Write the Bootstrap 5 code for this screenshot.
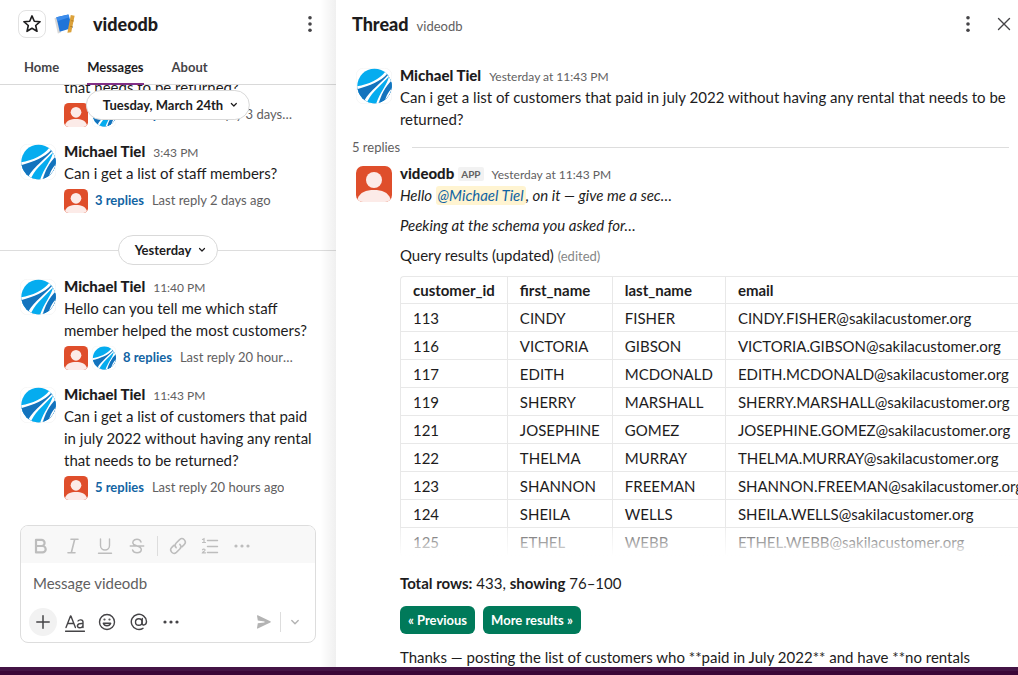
<!DOCTYPE html>
<html lang="en">
<head>
<meta charset="utf-8">
<meta name="viewport" content="width=device-width, initial-scale=1">
<title>videodb</title>
<link href="https://cdn.jsdelivr.net/npm/bootstrap@5.3.0/dist/css/bootstrap.min.css" rel="stylesheet">
<style>
body{font:400 15px/22px Lato,sans-serif;color:#1d1c1d;background:#fff}
button,input{font-family:inherit}
.app{height:100vh}
.app-main{min-height:0}
.app-bar{height:8px;background:linear-gradient(#441445 50%,#3a0637 50%)}
.pane-dm{flex:0 0 33%;min-width:0;position:relative}
.pane-dm::after{content:"";position:absolute;inset:0 0 0 auto;width:16px;background:linear-gradient(to right,rgba(0,0,0,0),rgba(0,0,0,.06));pointer-events:none}
.pane-thread{min-width:0}
.bare{background:none;border:0;padding:0;color:#454447;display:flex;align-items:center;justify-content:center}
.ib{width:28px;height:28px;flex:none}
.dm-head{height:48px;padding:0 12px 0 18px}
.star{border:1px solid #e2e2e2;border-radius:8px;color:#1d1c1d}
.title{font-size:18px;line-height:24px;font-weight:900;margin:0}
.dm-tabs{height:37px;padding:0 24px;gap:28px;border-bottom:1px solid #d9d9d9}
.dm-tabs a{color:#454447;font-size:13px;line-height:38px;font-weight:700;text-decoration:none;height:37px}
.dm-tabs a.active{color:#1d1c1d;box-shadow:inset 0 -2px #823087}
.feed{min-height:0;overflow:hidden;position:relative}
.pill{height:30px;border:1px solid #d9d9d9;border-radius:15px;background:#fff;font-size:13px;font-weight:700;color:#1d1c1d;padding:0 9px 0 16px;gap:5px}
.pill-top{position:absolute;top:5px;left:50%;transform:translateX(-50%);white-space:nowrap;z-index:1}
.day{margin:17px 0 2px}
.day::before,.day::after{content:"";flex:1;height:1px;background:#ddd}
.msg{padding:8px 20px 5px;gap:8px}
.msg-t{padding:0 8px 8px 20px;gap:8px}
.av{width:36px;height:36px;flex:none;margin-top:4px}
.av-s{width:24px;height:24px;flex:none}
.msg-b{min-width:0;flex:1}
.meta{height:22px}
.who{font-weight:900}
.when{font-size:12px;line-height:1;color:#616061;margin-left:8px}
.msg p,.msg-t p{margin:0}
.thr{margin-top:5px;gap:4px;padding-right:22px;font-size:13px;line-height:22px;color:#616061}
.thr a{color:#1264a3;font-weight:700;text-decoration:none;margin:0 4px 0 3px;white-space:nowrap}
.composer{margin:20px 20px 24px;border:1px solid #ddd;border-radius:8px;overflow:hidden}
.fmt{height:37px;background:#f8f8f8;padding:2px 6px 0;gap:4px}
.fmt .bare{color:#bdbdbd}
.vsep{width:1px;height:20px;background:#ddd;margin:0 2px}
.composer input{display:block;width:100%;height:40px;border:0;outline:0;padding:0 12px;background:#fff}
.composer input::placeholder{color:#616061;opacity:1}
.acts{height:39px;padding:0 10px 2px 8px;gap:4px}
.plus{background:#f2f2f2;border-radius:50%}
.acts .faint{color:#b3b3b3}
.acts .send{width:24px;height:28px}
.th-head{height:48px;padding:0 0 0 16px}
.th-sub{font-size:13px;color:#616061;margin:4px 0 0 8px}
.th-top{margin-top:16px}
.count{font-size:13px;color:#616061;margin:6px 9px 4px 16px;gap:12px}
.count::after{content:"";flex:1;height:1px;background:#ddd}
.thread-body{min-height:0;overflow:hidden}
.app-tag{font-size:10px;line-height:14px;font-weight:700;color:#616061;background:#f2f2f2;border-radius:2px;padding:0 3px;margin-left:4px;display:inline-block;vertical-align:1px}
.mention{background:#fff4d1;color:#1264a3;border-radius:3px;padding:0 2px 1px;text-decoration:none}
.msg-t .gap-top{margin-top:8px}
.edited{font-size:13px;line-height:1;color:#868686}
.grid-wrap{margin-top:10px;height:280px;overflow:hidden;position:relative;margin-right:-8px}
.grid-wrap::after{content:"";position:absolute;inset:auto 0 0;height:28px;background:linear-gradient(rgba(255,255,255,.25),rgba(255,255,255,.65) 60%,#fff)}
.grid{border-collapse:separate;border-spacing:0;border:1px solid #e8e8e8;border-width:1px 0 0 1px;border-radius:4px}
.grid td,.grid th{padding:0 12px;height:28px;border:1px solid #e8e8e8;border-width:0 1px 1px 0;white-space:nowrap}
.grid th{height:27px;font-weight:700}
.btn-go{background:#007a5a;color:#fff;font-size:13px;line-height:18px;font-weight:700;padding:4px 7px;border-radius:6px}
.btn-go:hover{background:#148567;color:#fff}
</style>
</head>
<body>
<svg width="0" height="0" class="position-absolute" aria-hidden="true">
<defs><clipPath id="disc"><circle cx="18.500" cy="18" r="17.2"/></clipPath></defs>
<symbol id="globe" viewBox="0 0 36 36"><rect x=".25" y=".25" width="35.5" height="35.5" rx="7" fill="#fff" stroke="#eee" stroke-width=".5"/><g clip-path="url(#disc)"><path fill="#05acef" d="M0 0h36v36H0z"/><path fill="#1373bd" d="M0 20C14 18 23 13 32 5l4 3v28H0z"/><path fill="#fff" d="M0 18.500C12 16.500 23 12 29.500 3.500l2 2C24 14 14 17.500 0 21.500z"/><path fill="#fff" d="M7 36C10 26 22 18 32.500 6.500L37 12C30 18 26 27 23 37H8z"/><path fill="#05acef" d="M10.500 36C13 27 23 19 33 8.500 31 17 24 24 20 36z"/><path fill="#1373bd" d="M22.500 36C25 27 29 19 36 12v16l-7 8z"/><path fill="#fff" d="M28 36C29.500 29 32 24 37 19l-1 4c-3 4-5 8-6 13z"/></g></symbol>
<symbol id="bot" viewBox="0 0 36 36"><rect width="36" height="36" rx="7" fill="#df4e2b"/><circle cx="18" cy="14" r="8" fill="#fcebe8"/><path fill="#fcebe8" d="M1.500 33C4 26 10 24 18 24s14 2 16.500 9c-1 2-3 3-5.500 3H7c-2.500 0-4.500-1-5.500-3z"/></symbol>
<symbol id="chev" viewBox="0 0 12 12"><path d="M3.500 4.500L6 7l2.500-2.500" fill="none" stroke="currentColor" stroke-width="1.200" stroke-linecap="round" stroke-linejoin="round"/></symbol>
<symbol id="kebab" viewBox="0 0 20 20"><g fill="currentColor"><circle cx="10" cy="3" r="2"/><circle cx="10" cy="10" r="2"/><circle cx="10" cy="17" r="2"/></g></symbol>
<symbol id="more" viewBox="0 0 20 20"><g fill="currentColor"><circle cx="4" cy="10" r="1.600"/><circle cx="10" cy="10" r="1.600"/><circle cx="16" cy="10" r="1.600"/></g></symbol>
</svg>
<div class="app d-flex flex-column overflow-hidden">
<main class="app-main d-flex flex-grow-1">
<section class="pane-dm d-flex flex-column">
<header class="dm-head d-flex align-items-center flex-shrink-0">
<button class="bare ib star" aria-label="Star"><svg width="20" height="20" viewBox="0 0 20 20" fill="none" stroke="currentColor" stroke-width="1.600" stroke-linejoin="round"><path d="M10 1.900l2.300 5.300 5.800.5-4.400 3.800 1.300 5.800-5-3-5 3 1.300-5.800L1.900 7.700l5.800-.5z"/></svg></button>
<svg class="ms-2 me-3" width="23" height="24" viewBox="0 0 24 24" aria-hidden="true"><path d="M.5 6l3-1 3.500 16-3 .8z" fill="#d8d8d8"/><path d="M2.500 5L15 2l4.500 14L6 20z" fill="#1f74d8"/><path d="M2.500 5L15 2l1 3-12.700 4z" fill="#3c8cec"/><path d="M17.500 2.500l4 1-3.500 17-4 .5z" fill="#dca23b"/><path d="M18 8.500l2.500.4M17 14.500l2.300.3" stroke="#b57c20"/></svg>
<h1 class="title">videodb</h1>
<button class="bare ib ms-auto" aria-label="More actions"><svg width="18" height="18"><use href="#kebab"/></svg></button>
</header>
<nav class="dm-tabs d-flex flex-shrink-0"><a href="#">Home</a><a href="#" class="active">Messages</a><a href="#">About</a></nav>
<div class="feed flex-grow-1 d-flex flex-column justify-content-end">
<button class="bare pill pill-top">Tuesday, March 24th<svg width="12" height="12"><use href="#chev"/></svg></button>
<article class="msg d-flex flex-shrink-0"><span class="av"></span><div class="msg-b"><p>that needs to be returned?</p>
<div class="thr d-flex"><svg class="av-s"><use href="#bot"/></svg><svg class="av-s"><use href="#globe"/></svg><a href="#">10 replies</a><span class="text-truncate">Last reply 3 days ago</span></div></div></article>
<article class="msg d-flex flex-shrink-0"><svg class="av"><use href="#globe"/></svg><div class="msg-b"><div class="meta"><span class="who">Michael Tiel</span><span class="when">3:43 PM</span></div><p>Can i get a list of staff members?</p>
<div class="thr d-flex"><svg class="av-s"><use href="#bot"/></svg><a href="#">3 replies</a><span class="text-truncate">Last reply 2 days ago</span></div></div></article>
<div class="day d-flex align-items-center flex-shrink-0"><button class="bare pill">Yesterday<svg width="12" height="12"><use href="#chev"/></svg></button></div>
<article class="msg d-flex flex-shrink-0"><svg class="av"><use href="#globe"/></svg><div class="msg-b"><div class="meta"><span class="who">Michael Tiel</span><span class="when">11:40 PM</span></div><p>Hello can you tell me which staff member helped the most customers?</p>
<div class="thr d-flex"><svg class="av-s"><use href="#bot"/></svg><svg class="av-s"><use href="#globe"/></svg><a href="#">8 replies</a><span class="text-truncate">Last reply 20 hours ago</span></div></div></article>
<article class="msg d-flex flex-shrink-0"><svg class="av"><use href="#globe"/></svg><div class="msg-b"><div class="meta"><span class="who">Michael Tiel</span><span class="when">11:43 PM</span></div><p>Can i get a list of customers that paid in july 2022 without having any rental that needs to be returned?</p>
<div class="thr d-flex"><svg class="av-s"><use href="#bot"/></svg><a href="#">5 replies</a><span class="text-truncate">Last reply 20 hours ago</span></div></div></article>
</div>
<form class="composer flex-shrink-0">
<div class="fmt d-flex align-items-center">
<button type="button" class="bare ib" aria-label="Bold"><svg width="20" height="20" viewBox="0 0 20 20" fill="none" stroke="currentColor" stroke-width="2.200" stroke-linejoin="round"><path d="M5 3.800h5.500a3 3 0 010 6.200H5zM5 10h6.500a3.200 3.200 0 010 6.400H5z"/></svg></button>
<button type="button" class="bare ib" aria-label="Italic"><svg width="20" height="20" viewBox="0 0 20 20" fill="none" stroke="currentColor" stroke-width="1.600" stroke-linecap="round"><path d="M8 3.300h7M5 16.700h7M11.700 3.300L8.300 16.700"/></svg></button>
<button type="button" class="bare ib" aria-label="Underline"><svg width="20" height="20" viewBox="0 0 20 20" fill="none" stroke="currentColor" stroke-width="1.400" stroke-linecap="round"><path d="M5.500 3v6.500a4.500 4.500 0 009 0V3M3.500 17.200h13"/></svg></button>
<button type="button" class="bare ib" aria-label="Strikethrough"><svg width="20" height="20" viewBox="0 0 20 20" fill="none" stroke="currentColor" stroke-width="1.500" stroke-linecap="round"><path d="M3.300 10h13.400M14 6c-.7-1.900-2-2.800-4-2.800-3.800 0-5.300 3.300-3.300 5.300L10 10c3 .9 4.300 1.800 4.300 3.600 0 2-1.800 3.200-4.300 3.200-2.300 0-3.800-1-4.400-2.800"/></svg></button>
<span class="vsep"></span>
<button type="button" class="bare ib" aria-label="Link"><svg width="20" height="20" viewBox="0 0 20 20" fill="none" stroke="currentColor" stroke-width="1.500" stroke-linecap="round"><path d="M8.200 11.800a3.400 3.400 0 010-4.800l3.400-3.400a3.400 3.400 0 014.800 4.800l-2.200 2.200M11.800 8.200a3.400 3.400 0 010 4.800l-3.400 3.400a3.400 3.400 0 01-4.800-4.800l2.200-2.200"/></svg></button>
<button type="button" class="bare ib" aria-label="Ordered list"><svg width="20" height="20" viewBox="0 0 20 20" fill="none" stroke="currentColor" stroke-width="1.400" stroke-linecap="round"><path d="M7.500 4.500h10M7.500 10.500h10M7.500 16.500h10"/><path stroke-width="1.200" d="M2.500 3.500L4 2.800v3.700M2.500 6.500h3M2.500 13.800c.4-1 2.700-1 2.500.4-.1 1-2 1.600-2.500 2.600h3"/></svg></button>
<button type="button" class="bare ib" aria-label="More formatting"><svg width="20" height="20"><use href="#more"/></svg></button>
</div>
<input type="text" placeholder="Message videodb" aria-label="Message videodb">
<div class="acts d-flex align-items-center">
<button type="button" class="bare ib plus" aria-label="Attach"><svg width="16" height="16" viewBox="0 0 16 16" stroke="currentColor" stroke-width="1.500" stroke-linecap="round"><path d="M8 1.800v12.400M1.800 8h12.400"/></svg></button>
<button type="button" class="bare ib" aria-label="Show formatting"><svg width="20" height="20" viewBox="0 0 20 20" fill="none" stroke="currentColor" stroke-width="1.400" stroke-linecap="round" stroke-linejoin="round"><path d="M1 15.500L5.500 4h.4L10.400 15.500M2.600 11.500h6.200M13 9c1-1.600 5-1.800 5 1v5.500M18 11.500c-7-.5-6.600 4.200-3.400 4.200 1.800 0 3.400-1.200 3.400-3M.5 19.200h19"/></svg></button>
<button type="button" class="bare ib" aria-label="Emoji"><svg width="18" height="18" viewBox="0 0 18 18" fill="none" stroke="currentColor" stroke-width="1.400" stroke-linecap="round"><circle cx="9" cy="9" r="7.500"/><path d="M5.300 10.300c1.200 3.300 6.200 3.300 7.400 0z" stroke-linejoin="round"/><circle cx="6.500" cy="6.500" r=".4" fill="currentColor"/><circle cx="11.500" cy="6.500" r=".4" fill="currentColor"/></svg></button>
<button type="button" class="bare ib" aria-label="Mention"><svg width="18" height="18" viewBox="0 0 18 18" fill="none" stroke="currentColor" stroke-width="1.400" stroke-linecap="round"><circle cx="8.800" cy="9" r="3.300"/><path d="M12.300 5.500l-.3 4.500c0 3 4.500 2.600 4.500-1.500a7.600 7.600 0 10-3.500 6.800"/></svg></button>
<button type="button" class="bare ib" aria-label="More"><svg width="20" height="20"><use href="#more"/></svg></button>
<button type="submit" class="bare send ms-auto faint" aria-label="Send"><svg width="16" height="16" viewBox="0 0 16 16" fill="currentColor"><path d="M1 1.800c0-.5.300-.7.800-.5l12.500 6c.7.300.7 1 0 1.300l-12.500 6c-.5.200-.8 0-.8-.5l.8-4.800L8.500 8.500v-1L1.800 6.600z"/></svg></button>
<span class="vsep m-0"></span>
<button type="button" class="bare faint" aria-label="Send options"><svg width="20" height="20" viewBox="0 0 20 20" fill="none" stroke="currentColor" stroke-width="1.400" stroke-linecap="round" stroke-linejoin="round"><path d="M6.800 8.500l3.200 3.200 3.200-3.200"/></svg></button>
</div>
</form>
</section>
<section class="pane-thread flex-grow-1 d-flex flex-column">
<header class="th-head d-flex align-items-center flex-shrink-0"><h2 class="title">Thread</h2><span class="th-sub">videodb</span>
<button class="bare ib ms-auto" aria-label="More actions"><svg width="18" height="18"><use href="#kebab"/></svg></button>
<button class="bare ib ms-2" aria-label="Close"><svg width="16" height="16" viewBox="0 0 16 16" stroke="currentColor" stroke-width="1.400" stroke-linecap="round"><path d="M2.500 2.500l11 11M13.500 2.500l-11 11"/></svg></button></header>
<div class="thread-body flex-grow-1">
<article class="msg-t th-top d-flex pb-0"><svg class="av"><use href="#globe"/></svg><div class="msg-b"><div class="meta"><span class="who">Michael Tiel</span><span class="when">Yesterday at 11:43 PM</span></div><p>Can i get a list of customers that paid in july 2022 without having any rental that needs to be returned?</p></div></article>
<div class="count d-flex align-items-center">5 replies</div>
<article class="msg-t d-flex"><svg class="av"><use href="#bot"/></svg><div class="msg-b"><div class="meta"><span class="who">videodb</span><span class="app-tag">APP</span><span class="when">Yesterday at 11:43 PM</span></div>
<p><em>Hello <a href="#" class="mention">@Michael Tiel</a>, on it — give me a sec…</em></p>
<p class="gap-top"><em>Peeking at the schema you asked for…</em></p>
<p class="gap-top">Query results (updated) <span class="edited">(edited)</span></p>
<div class="grid-wrap"><table class="grid">
<thead><tr><th>customer_id</th><th>first_name</th><th>last_name</th><th>email</th></tr></thead>
<tbody>
<tr><td>113</td><td>CINDY</td><td>FISHER</td><td>CINDY.FISHER@sakilacustomer.org</td></tr>
<tr><td>116</td><td>VICTORIA</td><td>GIBSON</td><td>VICTORIA.GIBSON@sakilacustomer.org</td></tr>
<tr><td>117</td><td>EDITH</td><td>MCDONALD</td><td>EDITH.MCDONALD@sakilacustomer.org</td></tr>
<tr><td>119</td><td>SHERRY</td><td>MARSHALL</td><td>SHERRY.MARSHALL@sakilacustomer.org</td></tr>
<tr><td>121</td><td>JOSEPHINE</td><td>GOMEZ</td><td>JOSEPHINE.GOMEZ@sakilacustomer.org</td></tr>
<tr><td>122</td><td>THELMA</td><td>MURRAY</td><td>THELMA.MURRAY@sakilacustomer.org</td></tr>
<tr><td>123</td><td>SHANNON</td><td>FREEMAN</td><td>SHANNON.FREEMAN@sakilacustomer.org</td></tr>
<tr><td>124</td><td>SHEILA</td><td>WELLS</td><td>SHEILA.WELLS@sakilacustomer.org</td></tr>
<tr><td>125</td><td>ETHEL</td><td>WEBB</td><td>ETHEL.WEBB@sakilacustomer.org</td></tr>
</tbody></table></div>
<p class="mt-3"><strong>Total rows:</strong> 433, <strong>showing</strong> 76–100</p>
<div class="d-flex gap-2 my-2 py-1"><button class="btn btn-go">« Previous</button><button class="btn btn-go">More results »</button></div>
<p class="text-nowrap">Thanks — posting the list of customers who **paid in July 2022** and have **no rentals</p>
</div></article>
</div>
</section>
</main>
<div class="app-bar flex-shrink-0"></div>
</div>
<script src="https://cdn.jsdelivr.net/npm/bootstrap@5.3.0/dist/js/bootstrap.bundle.min.js"></script>
</body>
</html>
